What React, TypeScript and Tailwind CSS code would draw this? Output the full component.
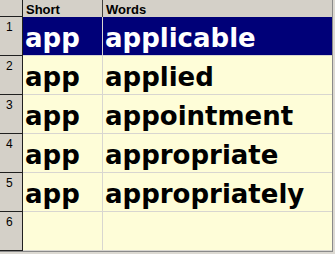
import React from "react";

const rows = [
  { n: "1", s: "app", w: "applicable", sel: true },
  { n: "2", s: "app", w: "applied" },
  { n: "3", s: "app", w: "appointment" },
  { n: "4", s: "app", w: "appropriate" },
  { n: "5", s: "app", w: "appropriately" },
  { n: "6", s: "", w: "" },
];

const yellow = "bg-[#fefdd8] text-black";
const navy = "bg-[#000078] text-white";

export default function App() {
  return (
    <div className="w-[335px] h-[254px] bg-[#dcd9d2] overflow-hidden">
      <div className="w-[333px] h-[252px] border-r border-b border-[#8a8a8a] flex flex-col">
        <div className="flex h-[17px] bg-[#d4d0c8]">
          <div className="w-[23px] h-[17px] border-r border-b border-[#202020]" />
          <div className="w-[80px] h-[17px] border-r border-[#404040] pl-[3px] pt-[4px] leading-[12px] text-[13px] font-bold text-black font-['Liberation_Sans',sans-serif]">
            Short
          </div>
          <div className="flex-1 h-[17px] pl-[3px] pt-[4px] leading-[12px] text-[13px] font-bold text-black font-['Liberation_Sans',sans-serif]">
            Words
          </div>
        </div>
        {rows.map((r) => (
          <div key={r.n} className="flex h-[39px]">
            <div className="w-[23px] h-[39px] bg-[#d4d0c8] border-r border-b border-[#202020] pl-[6px] pt-[3px] leading-[14px] text-[12px] text-black font-['Liberation_Sans',sans-serif]">
              {r.n}
            </div>
            <div
              className={`w-[80px] h-[39px] border-r border-b border-[#d8d6d0] pl-[2px] pt-[4px] leading-[34px] text-[26px] font-bold whitespace-nowrap overflow-hidden font-['DejaVu_Sans',sans-serif] ${
                r.sel ? navy : yellow
              }`}
            >
              {r.s}
            </div>
            <div
              className={`flex-1 h-[39px] border-b border-[#d8d6d0] pl-[2px] pt-[4px] leading-[34px] text-[26px] font-bold whitespace-nowrap overflow-hidden font-['DejaVu_Sans',sans-serif] ${
                r.sel ? navy : yellow
              }`}
            >
              {r.w}
            </div>
          </div>
        ))}
      </div>
    </div>
  );
}
